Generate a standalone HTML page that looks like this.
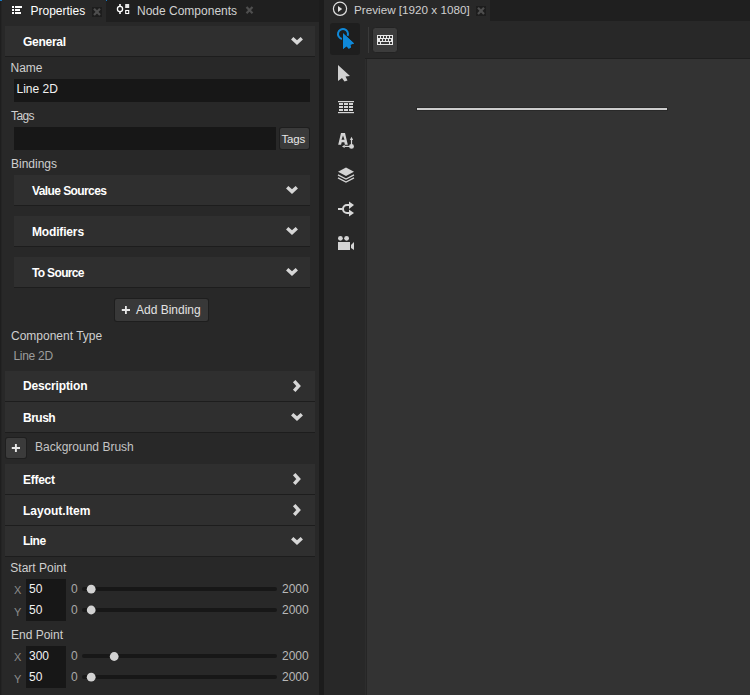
<!DOCTYPE html>
<html><head><meta charset="utf-8">
<style>
*{margin:0;padding:0;box-sizing:border-box}
html,body{width:750px;height:695px;overflow:hidden;background:#1f1f1f;font-family:"Liberation Sans",sans-serif}
.a{position:absolute}
.t{position:absolute;font-size:12px;line-height:14px;white-space:pre;color:#cfcfcf}
.b{position:absolute;font-size:12px;line-height:14px;white-space:pre;color:#fff;font-weight:bold}
.hd{position:absolute;background:#2f2f2f;border-bottom:1px solid #1d1d1d;height:31px}
.inp{position:absolute;background:#171717}
.btn{position:absolute;background:#3a3a3a;border-radius:2px}
svg{position:absolute;overflow:visible}
</style></head><body>
<!-- left panel -->
<div class="a" style="left:0;top:0;width:319px;height:22px;background:#1f1f1f"></div>
<div class="a" style="left:0;top:0;width:106px;height:22px;background:#282828"></div>
<div class="a" style="left:0;top:22px;width:319px;height:673px;background:#282828"></div>
<div class="a" style="left:0;top:0;width:1px;height:695px;background:#1e1e1e"></div>
<div class="a" style="left:1px;top:0;width:1px;height:695px;background:#242424"></div>
<div class="a" style="left:0;top:0;width:2px;height:1px;background:#1779c2"></div>
<div class="a" style="left:106px;top:0;width:1px;height:1px;background:#1779c2"></div>
<!-- separator -->
<div class="a" style="left:319px;top:0;width:5px;height:695px;background:#1c1c1c"></div>

<!-- tab icons -->
<svg style="left:0;top:0" width="106" height="22">
  <rect x="12" y="6" width="2" height="2" fill="#fff"/>
  <rect x="12" y="9" width="2" height="2" fill="#fff"/>
  <rect x="12" y="12" width="2" height="2" fill="#fff"/>
  <rect x="15" y="6" width="7" height="2" fill="#fff"/>
  <rect x="15" y="9" width="5" height="2" fill="#fff"/>
  <rect x="15" y="12" width="6" height="2" fill="#fff"/>
  <rect x="92" y="7" width="10" height="10" fill="#1d1d1d"/>
  <path d="M94 8.7 L100 15 M100 8.7 L94 15" stroke="#4e4e4e" stroke-width="2.2"/>
</svg>
<div class="t" style="left:30.5px;top:4px;color:#fff">Properties</div>
<svg style="left:106px;top:0" width="213" height="22">
  <path d="M14 4 V14" stroke="#fff" stroke-width="1.6"/>
  <circle cx="14" cy="9" r="2.6" fill="#1f1f1f" stroke="#fff" stroke-width="1.3"/>
  <rect x="19.2" y="4" width="4" height="4" fill="#e6e6e6"/>
  <rect x="19.7" y="10.5" width="3" height="3" fill="none" stroke="#fff" stroke-width="1.1"/>
  <path d="M140.5 7 L146.5 13.3 M146.5 7 L140.5 13.3" stroke="#4e4e4e" stroke-width="2.2"/>
</svg>
<div class="t" style="left:137px;top:4px;color:#d2d2d2">Node Components</div>

<!-- General header -->
<div class="hd" style="left:5px;top:26px;width:310px"></div>
<div class="b" style="left:23px;top:35px;letter-spacing:-0.27px">General</div>

<div class="t" style="left:10.5px;top:61px">Name</div>
<div class="inp" style="left:14px;top:79px;width:296px;height:23px"></div>
<div class="t" style="left:16.5px;top:82px;color:#f2f2f2">Line 2D</div>

<div class="t" style="left:11px;top:109px;letter-spacing:-0.6px">Tags</div>
<div class="inp" style="left:14px;top:127px;width:262px;height:23px"></div>
<div class="btn" style="left:280px;top:128px;width:29px;height:21px;box-shadow:0 0 0 1px #1e1e1e"></div>
<div class="t" style="left:281.5px;top:132px;color:#e6e6e6;font-size:11.5px;letter-spacing:-0.2px">Tags</div>

<div class="t" style="left:11px;top:157px">Bindings</div>
<div class="hd" style="left:14px;top:175px;width:296px"></div>
<div class="b" style="left:32px;top:184px;letter-spacing:-0.59px">Value Sources</div>
<div class="hd" style="left:14px;top:216px;width:296px"></div>
<div class="b" style="left:32px;top:225px;letter-spacing:-0.16px">Modifiers</div>
<div class="hd" style="left:14px;top:257px;width:296px"></div>
<div class="b" style="left:32px;top:266px;letter-spacing:-0.66px">To Source</div>

<div class="btn" style="left:115px;top:299px;width:93px;height:22px;background:#383838;box-shadow:0 0 0 1px #1e1e1e"></div>
<svg style="left:0;top:0" width="319" height="695">
  <path d="M121.8 310 H130 M125.9 306 V314" stroke="#e8e8e8" stroke-width="1.8"/>
</svg>
<div class="t" style="left:136px;top:303px;color:#e2e2e2">Add Binding</div>

<div class="t" style="left:11px;top:329px">Component Type</div>
<div class="t" style="left:13.5px;top:349px;color:#9c9c9c;letter-spacing:-0.3px">Line 2D</div>

<div class="hd" style="left:5px;top:371px;width:310px"></div>
<div class="b" style="left:23px;top:379px;letter-spacing:-0.15px">Description</div>
<div class="hd" style="left:5px;top:402px;width:310px"></div>
<div class="b" style="left:23px;top:411px;letter-spacing:-0.5px">Brush</div>

<div class="btn" style="left:6px;top:438px;width:20px;height:20px;background:#3b3b3b;box-shadow:0 0 0 1px #1f1f1f"></div>
<svg style="left:0;top:0" width="319" height="695">
  <path d="M11.8 448 H20 M15.9 443.9 V452.1" stroke="#e8e8e8" stroke-width="1.9"/>
</svg>
<div class="t" style="left:35px;top:440px;color:#c4c4c4">Background Brush</div>

<div class="hd" style="left:5px;top:464px;width:310px"></div>
<div class="b" style="left:23px;top:473px;letter-spacing:-0.28px">Effect</div>
<div class="hd" style="left:5px;top:495px;width:310px"></div>
<div class="b" style="left:23px;top:504px">Layout.Item</div>
<div class="hd" style="left:5px;top:526px;width:310px"></div>
<div class="b" style="left:23px;top:534px;letter-spacing:-0.53px">Line</div>

<!-- chevrons -->
<svg style="left:0;top:0" width="319" height="695" fill="none" stroke="#d6d6d6" stroke-width="3.4" stroke-linecap="butt" stroke-linejoin="miter">
  <path d="M292.2 38.2 L297 42.6 L301.8 38.2"/>
  <path d="M287.2 187.2 L292 191.6 L296.8 187.2"/>
  <path d="M287.2 228.2 L292 232.6 L296.8 228.2"/>
  <path d="M287.2 269.2 L292 273.6 L296.8 269.2"/>
  <path d="M294.2 381.2 L298.6 386 L294.2 390.8"/>
  <path d="M292.2 414.2 L297 418.6 L301.8 414.2"/>
  <path d="M294.2 474.2 L298.6 479 L294.2 483.8"/>
  <path d="M294.2 505.2 L298.6 510 L294.2 514.8"/>
  <path d="M292.2 538.2 L297 542.6 L301.8 538.2"/>
</svg>

<!-- line props -->
<div class="t" style="left:10.3px;top:561px">Start Point</div>
<div class="inp" style="left:26px;top:579px;width:40px;height:42px"></div>
<div class="t" style="left:14px;top:583px;color:#8c8c8c;font-size:11px">X</div>
<div class="t" style="left:14px;top:605px;color:#8c8c8c;font-size:11px">Y</div>
<div class="t" style="left:29px;top:582px;color:#f2f2f2">50</div>
<div class="t" style="left:29px;top:603px;color:#f2f2f2">50</div>
<div class="t" style="left:71px;top:582px;color:#a8a8a8">0</div>
<div class="t" style="left:71px;top:603px;color:#a8a8a8">0</div>
<div class="t" style="left:282px;top:582px;color:#b8b8b8">2000</div>
<div class="t" style="left:282px;top:603px;color:#b8b8b8">2000</div>

<div class="t" style="left:11px;top:628px">End Point</div>
<div class="inp" style="left:26px;top:646px;width:40px;height:42px"></div>
<div class="t" style="left:14px;top:650px;color:#8c8c8c;font-size:11px">X</div>
<div class="t" style="left:14px;top:672px;color:#8c8c8c;font-size:11px">Y</div>
<div class="t" style="left:29px;top:649px;color:#f2f2f2">300</div>
<div class="t" style="left:29px;top:670px;color:#f2f2f2">50</div>
<div class="t" style="left:71px;top:649px;color:#a8a8a8">0</div>
<div class="t" style="left:71px;top:670px;color:#a8a8a8">0</div>
<div class="t" style="left:282px;top:649px;color:#b8b8b8">2000</div>
<div class="t" style="left:282px;top:670px;color:#b8b8b8">2000</div>

<svg style="left:0;top:0" width="319" height="695">
  <g stroke="#171717" stroke-width="4" stroke-linecap="round">
    <path d="M84 589 H275"/><path d="M84 610 H275"/><path d="M84 656 H275"/><path d="M84 677 H275"/>
  </g>
  <g fill="#d2d2d2">
    <circle cx="91.2" cy="589.2" r="4.4"/><circle cx="91.2" cy="610" r="4.4"/>
    <circle cx="114.2" cy="656.5" r="4.4"/><circle cx="91.2" cy="677.2" r="4.4"/>
  </g>
</svg>

<!-- right panel -->
<div class="a" style="left:324px;top:0;width:426px;height:21px;background:#1f1f1f"></div>
<div class="a" style="left:324px;top:0;width:166px;height:21px;background:#282828"></div>
<div class="a" style="left:324px;top:21px;width:426px;height:674px;background:#282828"></div>
<div class="a" style="left:365px;top:58px;width:385px;height:1px;background:#1f1f1f"></div>
<div class="a" style="left:365px;top:59px;width:1px;height:636px;background:#2d2d2d"></div>
<div class="a" style="left:366px;top:59px;width:1px;height:636px;background:#262626"></div>
<div class="a" style="left:367px;top:59px;width:383px;height:636px;background:#333"></div>
<div class="t" style="left:354px;top:3px;color:#d0d0d0;font-size:11.7px">Preview [1920 x 1080]</div>
<svg style="left:0;top:0" width="750" height="695">
  <circle cx="340" cy="8.8" r="6.6" fill="none" stroke="#e0e0e0" stroke-width="1.2"/>
  <path d="M338 6 L342.2 9 L338 12 Z" fill="#e0e0e0"/>
  <rect x="476" y="6" width="10" height="10" fill="#1d1d1d"/>
  <path d="M478 7.7 L484 14 M484 7.7 L478 14" stroke="#4e4e4e" stroke-width="2.2"/>
  <!-- toolbar -->
  <rect x="330" y="23" width="30" height="32" rx="3" fill="#1e1e1e"/>
  <rect x="368" y="27" width="1" height="26" fill="#3a3a3a"/>
  <rect x="372.5" y="27.5" width="25" height="25" rx="3" fill="#3c3c3c" stroke="#232323" stroke-width="1"/>
  <!-- keyboard -->
  <rect x="377" y="35" width="16" height="10" fill="#e8e8e8"/>
  <g fill="#3c3c3c">
    <rect x="378" y="36" width="2" height="2"/><rect x="381" y="36" width="2" height="2"/><rect x="384" y="36" width="2" height="2"/><rect x="387" y="36" width="2" height="2"/><rect x="390" y="36" width="2" height="2"/>
    <rect x="380" y="39" width="2" height="2"/><rect x="383" y="39" width="2" height="2"/><rect x="386" y="39" width="2" height="2"/><rect x="389" y="39" width="2" height="2"/>
    <rect x="378" y="42" width="2" height="2"/><rect x="381" y="42" width="8" height="2"/><rect x="390" y="42" width="2" height="2"/>
  </g>
  <!-- selected tool icon -->
  <path d="M341.9 38.9 A5 5 0 1 1 347.6 35.9" fill="none" stroke="#0f88d8" stroke-width="2"/>
  <path d="M343 33.2 L354.1 43.5 L350.2 44.8 L351.1 47.3 L348.8 48.8 L346.6 46.3 L343 49 Z" fill="#0f88d8" stroke="#1e1e1e" stroke-width="1.4" paint-order="stroke"/>
  <path d="M343 33.2 L354.1 43.5 L350.2 44.8 L351.1 47.3 L348.8 48.8 L346.6 46.3 L343 49 Z" fill="#0f88d8"/>
  <!-- arrow -->
  <path d="M338 65 L350 76 L345.5 76.5 L347.5 80.5 L344.5 81.5 L342 78 L338 81 Z" fill="#d0d0d0"/>
  <!-- table -->
  <g fill="#d6d6d6">
    <rect x="338" y="101" width="16" height="1.2"/>
    <rect x="338" y="112" width="16" height="1.2"/>
    <rect x="339" y="103" width="4" height="2"/><rect x="344" y="103" width="4" height="2"/><rect x="349" y="103" width="4" height="2"/>
    <rect x="339" y="106" width="4" height="2"/><rect x="344" y="106" width="4" height="2"/><rect x="349" y="106" width="4" height="2"/>
    <rect x="339" y="109" width="4" height="2"/><rect x="344" y="109" width="4" height="2"/><rect x="349" y="109" width="4" height="2"/>
  </g>
  <!-- text icon -->
  <path fill-rule="evenodd" d="M338.2 144.8 L341 133 L345 133 L347.8 144.8 L344.9 144.8 L344.3 142.2 L341.7 142.2 L341.1 144.8 Z M341.5 139.8 L344.5 139.8 L343 135.4 Z" fill="#d4d4d4"/>
  <path d="M351.5 146.5 V139.5" stroke="#d4d4d4" stroke-width="1.2"/>
  <path d="M349.9 139.9 L351.5 136.8 L353.1 139.9 Z" fill="#d4d4d4"/>
  <path d="M351.5 146.4 H344.3" stroke="#d4d4d4" stroke-width="1.2"/>
  <path d="M344.7 144.8 L342 146.4 L344.7 148 Z" fill="#d4d4d4"/>
  <circle cx="351.5" cy="146.4" r="2.45" fill="#d4d4d4"/>
  <!-- layers -->
  <path d="M338 171.8 L346 167.6 L354 171.8 L346 176 Z" fill="#d4d4d4"/>
  <path d="M338 174.8 L346 179 L354 174.8" fill="none" stroke="#d4d4d4" stroke-width="1.3"/>
  <path d="M338 177.8 L346 182 L354 177.8" fill="none" stroke="#d4d4d4" stroke-width="1.3"/>
  <!-- flow -->
  <path d="M338 209 H342.5" stroke="#d8d8d8" stroke-width="2"/>
  <path d="M350 205 H347 A4 4 0 0 0 347 213 H350" fill="none" stroke="#d8d8d8" stroke-width="2"/>
  <path d="M349 201.5 L354 205 L349 209 Z" fill="#d8d8d8"/>
  <path d="M349 209.5 L354 213 L349 216.5 Z" fill="#d8d8d8"/>
  <!-- camera -->
  <circle cx="340.4" cy="238.3" r="2.4" fill="#d4d4d4"/>
  <circle cx="346.6" cy="238.3" r="2.4" fill="#d4d4d4"/>
  <rect x="338" y="242" width="12" height="8" fill="#d4d4d4"/>
  <path d="M351 245 L354 242 L354 250 L351 248 Z" fill="#d4d4d4"/>
  <!-- line in canvas -->
  <rect x="416" y="107" width="252" height="4" fill="#292929"/>
  <rect x="417" y="108" width="250" height="2" fill="#cdcdcd"/>
</svg>
</body></html>
